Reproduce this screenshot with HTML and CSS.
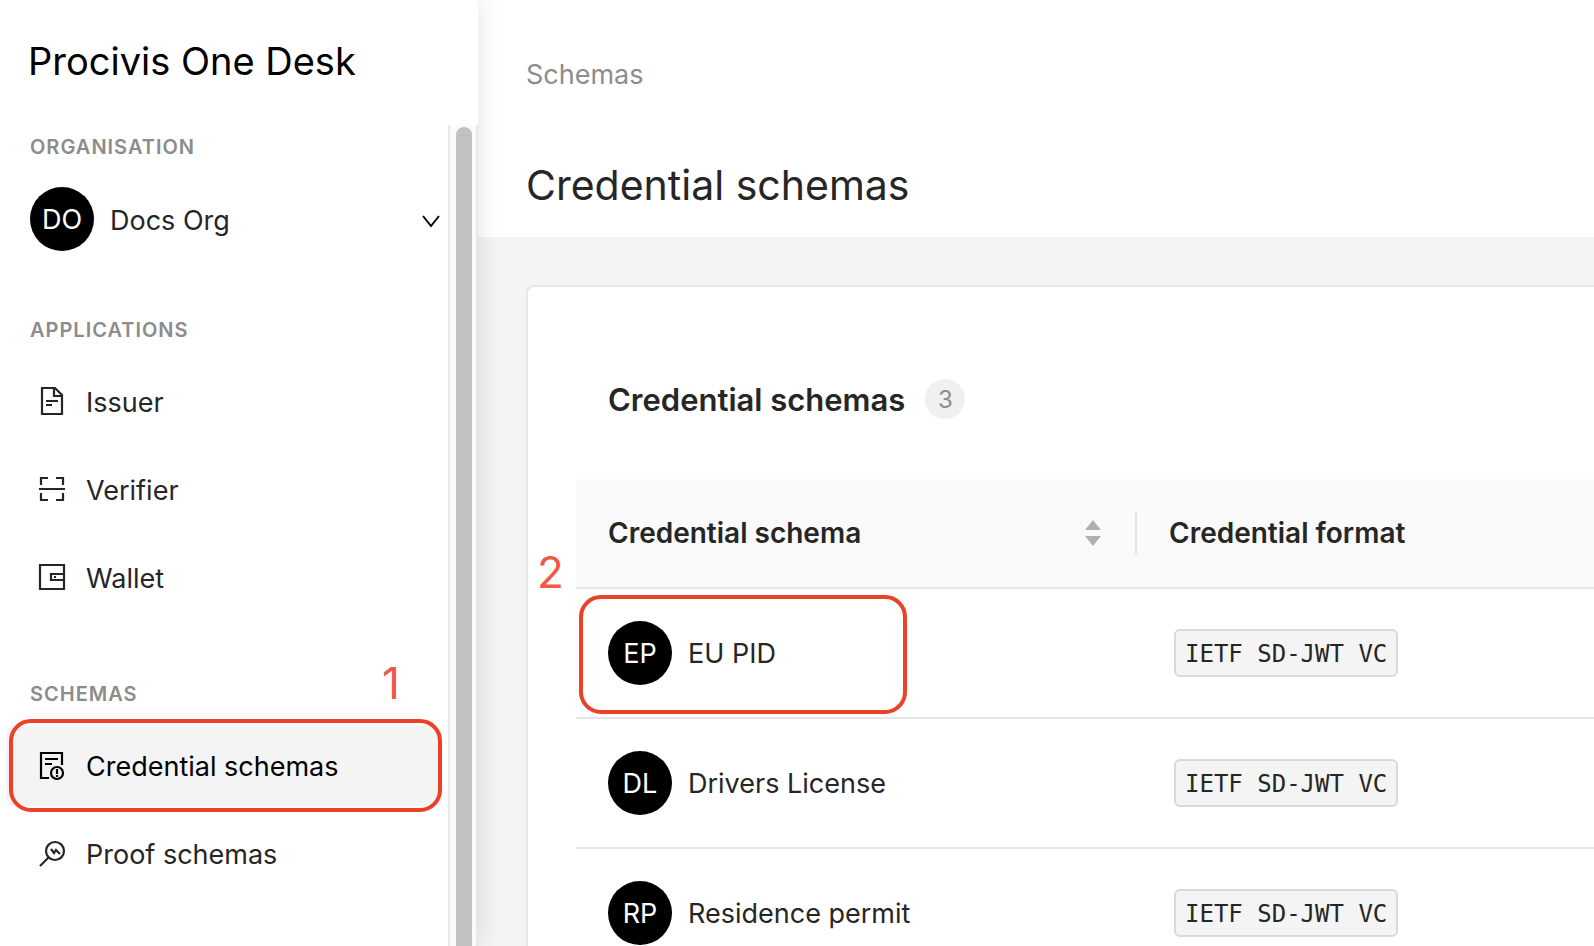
FILE: index.html
```html
<!DOCTYPE html>
<html lang="en">
<head>
	<meta charset="UTF-8">
	<title>Procivis One Desk</title>
	<link rel="stylesheet" href="styles.css">
</head>
<body>
	<div class="app">
		<aside class="sidebar">
			<div class="logo">Procivis One Desk</div>
			<div class="sidebar-body">
				<nav class="menu">
					<h2 class="menu-title">ORGANISATION</h2>
					<button class="org" type="button">
						<span class="avatar">DO</span>
						<span class="org-name">Docs Org</span>
						<svg class="arrow" width="18" height="18" viewBox="0 0 18 18" fill="none" stroke="#000" stroke-width="2"><path d="M1 6l8 10 8-10"/></svg>
					</button>
					<h2 class="menu-title">APPLICATIONS</h2>
					<ul class="menu-list">
						<li><a class="menu-item" href="#">
							<svg class="icon" viewBox="0 0 28 28"><path d="M4 0h13l7 7v19H4zM16 0v8h8M8 13h12M8 17h6"/></svg>
							<span class="label">Issuer</span>
						</a></li>
						<li><a class="menu-item" href="#">
							<svg class="icon" viewBox="0 0 28 28"><path d="M3 9V2h7M18 2h7v7M3 17v7h7M18 24h7v-7M1 13h26"/></svg>
							<span class="label">Verifier</span>
						</a></li>
						<li><a class="menu-item" href="#">
							<svg class="icon" viewBox="0 0 28 28"><path d="M2 1h24v24H2zM26 10H13v6h13M16 13h2"/></svg>
							<span class="label">Wallet</span>
						</a></li>
					</ul>
					<h2 class="menu-title">SCHEMAS</h2>
					<ul class="menu-list">
						<li><a class="menu-item selected" href="#">
							<svg class="icon" viewBox="0 0 28 28"><path d="M11 26H3V1h21v12M7 7h13M7 12h7"/><circle cx="19" cy="21" r="6"/><path d="M19 17v5M19 23v2"/></svg>
							<span class="label">Credential schemas</span>
							<span class="mark mark-menu"></span>
							<span class="step step-menu">1</span>
						</a></li>
						<li><a class="menu-item" href="#">
							<svg class="icon" viewBox="0 0 28 28"><circle cx="17" cy="11" r="9"/><path d="M11 17l-9 9M13 9l3 4 2-3 4 4"/></svg>
							<span class="label">Proof schemas</span>
						</a></li>
					</ul>
				</nav>
				<div class="scrollbar"><div class="thumb"></div></div>
			</div>
		</aside>
		<main class="main">
			<header class="header">
				<a class="breadcrumb" href="#">Schemas</a>
				<h1 class="page-title">Credential schemas</h1>
			</header>
			<section class="card">
				<div class="card-head">
					<h2 class="card-title">Credential schemas</h2>
					<span class="count">3</span>
				</div>
				<table class="table">
					<thead>
						<tr>
							<th class="col-name">
								<div class="th-inner">
									<span>Credential schema</span>
									<button class="sorter" type="button" aria-label="Sort">
										<svg width="16" height="26" viewBox="0 0 16 26" fill="#b0b0b0"><path d="M8 0l8 10H0zM8 26l8-10H0z"/></svg>
									</button>
								</div>
							</th>
							<th>Credential format</th>
						</tr>
					</thead>
					<tbody>
						<tr>
							<td>
								<div class="schema">
									<span class="avatar">EP</span>
									<span class="label">EU PID</span>
									<span class="mark mark-row"></span>
									<span class="step step-row">2</span>
								</div>
							</td>
							<td><code class="tag">IETF SD-JWT VC</code></td>
						</tr>
						<tr>
							<td>
								<div class="schema">
									<span class="avatar">DL</span>
									<span class="label">Drivers License</span>
								</div>
							</td>
							<td><code class="tag">IETF SD-JWT VC</code></td>
						</tr>
						<tr>
							<td>
								<div class="schema">
									<span class="avatar">RP</span>
									<span class="label">Residence permit</span>
								</div>
							</td>
							<td><code class="tag">IETF SD-JWT VC</code></td>
						</tr>
					</tbody>
				</table>
			</section>
		</main>
	</div>
</body>
</html>
```

FILE: styles.css
```css
*{
	margin: 0;
	padding: 0;
	box-sizing: border-box;
}
body{
	font-family: Inter, "Liberation Sans", sans-serif;
	font-size: 27px;
	line-height: 44px;
	color: #262626;
}
ul{
	list-style: none;
}
a{
	color: inherit;
	text-decoration: none;
}
button{
	font: inherit;
	color: inherit;
	background: none;
	border: none;
}
.app{
	display: flex;
	height: 100vh;
	overflow: hidden;
}

/* sidebar */
.sidebar{
	display: flex;
	flex-direction: column;
	flex: none;
	width: 478px;
	background: #fff;
	box-shadow: 0 0 24px rgba(0, 0, 0, 0.12);
	position: relative;
	z-index: 1;
}
.logo{
	padding: 37px 28px 40px;
	font-size: 38px;
	line-height: 48px;
	color: #000;
}
.sidebar-body{
	display: flex;
	flex: 1;
	min-height: 0;
}
.menu{
	flex: 1;
	padding-left: 6px;
}
.menu-title{
	padding: 0 24px;
	font-size: 20px;
	line-height: 44px;
	font-weight: 600;
	letter-spacing: 1px;
	color: #8c8c8c;
}
.org{
	display: flex;
	align-items: center;
	width: 100%;
	padding: 18px 8px 57px 24px;
	text-align: left;
}
.org-name{
	flex: 1;
	padding: 3px 0 0 16px;
}
.avatar{
	flex: none;
	width: 64px;
	height: 64px;
	padding-top: 1px;
	line-height: 64px;
	border-radius: 50%;
	background: #000;
	color: #fff;
	text-align: center;
}
.label{
	padding-top: 2px;
}
.menu-list{
	display: flex;
	flex-direction: column;
	gap: 8px;
	padding: 10px 6px 54px 0;
}
.menu-item{
	display: flex;
	align-items: center;
	gap: 20px;
	height: 80px;
	padding: 0 32px;
	border-radius: 8px;
	position: relative;
}
.menu-item.selected{
	background: #f4f4f4;
	color: #000;
}
.icon{
	width: 28px;
	height: 28px;
	overflow: visible;
	fill: none;
	stroke: currentColor;
	stroke-width: 2.2;
}
.scrollbar{
	width: 30px;
	padding: 2px 4px 0 6px;
	background: #fafafa;
	border: solid #e8e8e8;
	border-width: 0 2px;
}
.thumb{
	width: 16px;
	height: 110%;
	border-radius: 8px;
	background: #c1c1c1;
}

/* content */
.main{
	flex: 1;
	min-width: 0;
	background: #f4f4f4;
}
.header{
	padding: 53px 48px 28px;
	margin-bottom: 48px;
	background: #fff;
}
.breadcrumb{
	color: #8c8c8c;
}
.page-title{
	padding-top: 64px;
	font-size: 41px;
	line-height: 48px;
	font-weight: 400;
}
.card{
	margin-left: 48px;
	padding: 64px 0 64px 48px;
	background: #fff;
	border: 2px solid #e6e6e6;
	border-right: none;
	border-radius: 8px 0 0 8px;
}
.card-head{
	display: flex;
	align-items: center;
	gap: 20px;
	padding: 25px 32px 57px;
}
.card-title{
	padding-top: 2px;
	font-size: 31px;
	line-height: 44px;
	font-weight: 600;
}
.count{
	width: 40px;
	height: 40px;
	line-height: 42px;
	border-radius: 50%;
	background: #f0f0f0;
	color: #8c8c8c;
	font-size: 24px;
	text-align: center;
}
.table{
	width: 100%;
	table-layout: fixed;
	border-collapse: separate;
	border-spacing: 0;
}
.table th{
	padding: 32px;
	background: #fafafa;
	border-bottom: 2px solid #e6e6e6;
	font-size: 28px;
	font-weight: 600;
	text-align: left;
}
.table .col-name{
	width: 561px;
	padding-right: 0;
}
.th-inner{
	display: flex;
	align-items: center;
	justify-content: space-between;
	padding-right: 34px;
	border-right: 2px solid #e6e6e6;
}
.sorter{
	display: flex;
}
.table td{
	padding: 32px;
	border-bottom: 2px solid #e6e6e6;
}
.schema{
	display: flex;
	align-items: center;
	gap: 16px;
	position: relative;
}
.tag{
	display: inline-block;
	margin-left: 5px;
	padding: 2px 9px 0;
	border: 2px solid #d9d9d9;
	border-radius: 6px;
	background: #f4f4f4;
	font: 24px/42px "DejaVu Sans Mono", monospace;
	vertical-align: middle;
}

/* step marks */
.mark{
	position: absolute;
	border: 4px solid #eb4126;
	border-radius: 22px;
}
.mark-menu{
	top: -7px;
	right: 0;
	bottom: -6px;
	left: 3px;
}
.mark-row{
	top: -26px;
	bottom: -29px;
	left: -29px;
	width: 328px;
}
.step{
	position: absolute;
	font-size: 44px;
	line-height: 44px;
	color: #ee5a48;
}
.step-menu{
	top: -65px;
	right: 42px;
}
.step-row{
	top: -71px;
	left: -71px;
}
```
